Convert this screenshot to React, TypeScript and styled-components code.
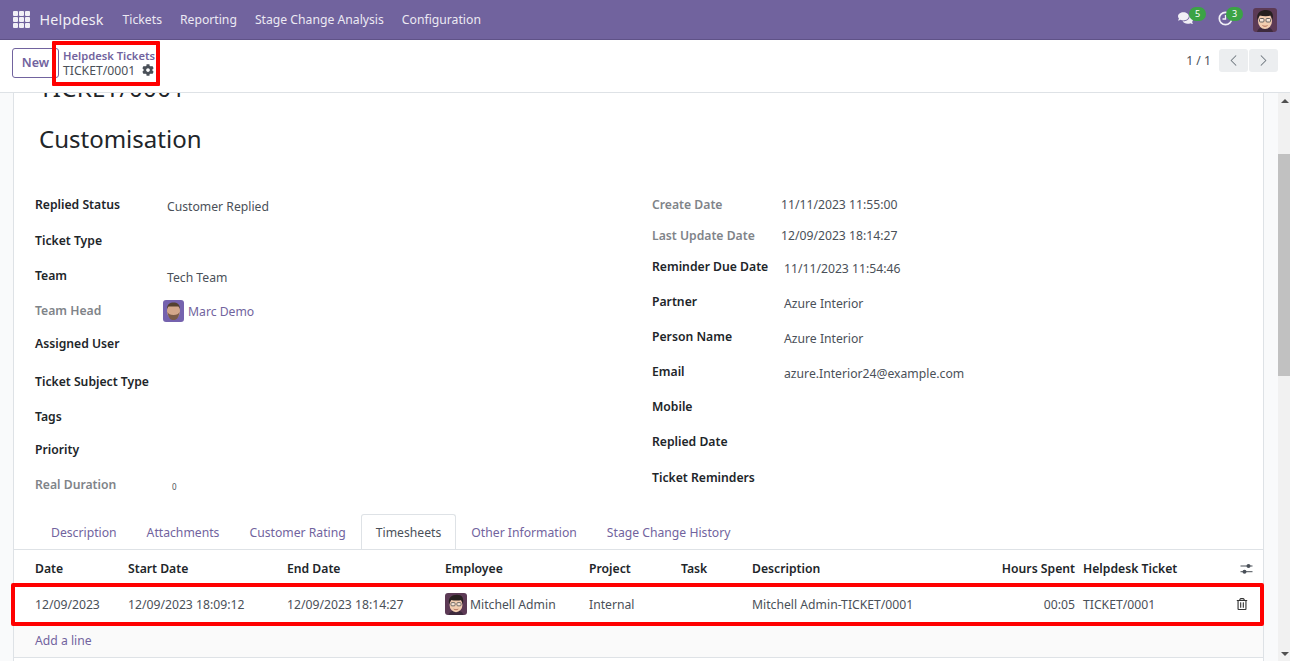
import styled, { createGlobalStyle } from 'styled-components'
import { ChevronLeft, ChevronRight } from 'lucide-react'
import { FaCog, FaComments, FaRegTrashAlt } from 'react-icons/fa'

const GlobalStyle = createGlobalStyle`
  html, body { margin: 0; height: 100%; }
  body {
    font-family: 'Noto Sans', 'Open Sans', sans-serif;
    font-size: 12.2px;
    color: #4a5058;
    background: #fff;
    overflow: hidden;
  }
  #root { height: 100%; }
`

const MitchellFace = ({ size }: { size: number }) => (
  <svg width={size} height={size} viewBox="0 0 24 24">
    <rect width="24" height="24" fill="#5c3a55" />
    <path d="M4 24c1-4 4-5 8-5s7 1 8 5z" fill="#3d2a3d" />
    <ellipse cx="12" cy="13" rx="7" ry="8" fill="#f2cdb0" />
    <path d="M4.500 12C3 5 7.500 2 13 2s8 3.500 6.500 10l-1.500-4.500c-3 1-7.500 1-11.500 0z" fill="#26201f" />
    <rect x="6.500" y="10.500" width="4.500" height="3.500" rx="1" fill="#f8e6d8" stroke="#555" strokeWidth="0.9" />
    <rect x="13" y="10.500" width="4.500" height="3.500" rx="1" fill="#f8e6d8" stroke="#555" strokeWidth="0.9" />
    <path d="M9.500 17.500c1.500 1 3.500 1 5 0" stroke="#a8604a" strokeWidth="0.9" fill="none" />
  </svg>
)

const MarcFace = () => (
  <svg width="21" height="22" viewBox="0 0 21 22">
    <rect width="21" height="22" fill="#7562ae" />
    <ellipse cx="10.500" cy="11" rx="6.500" ry="8" fill="#d3a68a" />
    <path d="M4 9C4 4 7 2.500 10.500 2.500S17 4 17 9l-1.500-2.500h-10z" fill="#54402f" />
    <path d="M4.500 12c1 7 3.500 8 6 8s5-1 6-8c-1 2-2.500 3-6 3s-5-1-6-3z" fill="#7a5b48" />
  </svg>
)

const ClockIcon = () => (
  <svg width="15" height="15" viewBox="0 0 15 15" fill="none" stroke="#f1eff6" strokeWidth="1.700">
    <circle cx="7.500" cy="7.500" r="6.200" />
    <path d="M7.500 4v4H4.500" strokeWidth="1.300" />
  </svg>
)

const AppsIcon = () => (
  <AppsGrid>
    {Array.from({ length: 9 }).map((_, i) => (
      <i key={i} />
    ))}
  </AppsGrid>
)

const OptionalIcon = () => (
  <svg width="13" height="12" viewBox="0 0 13 12" fill="#4a5058">
    <rect x="0.500" y="2.500" width="12" height="1" />
    <rect x="0.500" y="8.200" width="12" height="1" />
    <circle cx="8.500" cy="3" r="2" />
    <circle cx="4.500" cy="8.700" r="2" />
  </svg>
)

const leftFields = [
  { label: 'Replied Status', value: 'Customer Replied', h: 36 },
  { label: 'Ticket Type', h: 35 },
  { label: 'Team', value: 'Tech Team', h: 35 },
  { label: 'Team Head', muted: true, user: 'Marc Demo', h: 33 },
  { label: 'Assigned User', h: 38 },
  { label: 'Ticket Subject Type', h: 35 },
  { label: 'Tags', h: 33 },
  { label: 'Priority', h: 35 },
  { label: 'Real Duration', muted: true, value: '0', small: true, h: 35 }
]

const rightFields = [
  { label: 'Create Date', muted: true, value: '11/11/2023 11:55:00', h: 31, tight: true },
  { label: 'Last Update Date', muted: true, value: '12/09/2023 18:14:27', h: 31, tight: true },
  { label: 'Reminder Due Date', value: '11/11/2023 11:54:46', h: 35 },
  { label: 'Partner', value: 'Azure Interior', h: 35 },
  { label: 'Person Name', value: 'Azure Interior', h: 35 },
  { label: 'Email', value: 'azure.Interior24@example.com', h: 35 },
  { label: 'Mobile', h: 35 },
  { label: 'Replied Date', h: 36 },
  { label: 'Ticket Reminders', h: 35 }
]

const tabs = ['Description', 'Attachments', 'Customer Rating', 'Timesheets', 'Other Information', 'Stage Change History']

const App = () => (
  <Page>
    <GlobalStyle />
    <NavBar>
      <AppsIcon />
      <Brand>Helpdesk</Brand>
      <NavItem>Tickets</NavItem>
      <NavItem>Reporting</NavItem>
      <NavItem>Stage Change Analysis</NavItem>
      <NavItem>Configuration</NavItem>
      <NavRight>
        <NavIcon $gap={25}>
          <FaComments size={18} color="#f1eff6" />
          <Badge $left={11}>5</Badge>
        </NavIcon>
        <NavIcon $gap={20}>
          <ClockIcon />
          <Badge $left={8}>3</Badge>
        </NavIcon>
        <NavAvatar>
          <MitchellFace size={24} />
        </NavAvatar>
      </NavRight>
    </NavBar>
    <ControlPanel>
      <NewButton>New</NewButton>
      <Breadcrumb>
        <BreadcrumbLink>Helpdesk Tickets</BreadcrumbLink>
        <BreadcrumbCurrent>
          TICKET/0001
          <FaCog size={12} color="#4a5058" />
        </BreadcrumbCurrent>
        <Highlight />
      </Breadcrumb>
      <Pager>
        <PagerText>1 / 1</PagerText>
        <PagerButtons>
          <PagerButton>
            <ChevronLeft size={19} strokeWidth={1.300} />
          </PagerButton>
          <PagerButton>
            <ChevronRight size={19} strokeWidth={1.300} />
          </PagerButton>
        </PagerButtons>
      </Pager>
    </ControlPanel>
    <Content>
      <Sheet>
        <Heading>TICKET/0001</Heading>
        <SubHeading>Customisation</SubHeading>
        <Columns>
          <FieldColumn>
            {leftFields.map((f) => (
              <FieldRow key={f.label} $h={f.h}>
                <FieldLabel $muted={f.muted} $width={132}>
                  {f.label}
                </FieldLabel>
                {f.user ? (
                  <UserValue>
                    <AvatarBox>
                      <MarcFace />
                    </AvatarBox>
                    <UserName>{f.user}</UserName>
                  </UserValue>
                ) : (
                  <FieldValue $small={f.small} $left={f.small ? 5 : 0}>
                    {f.value}
                  </FieldValue>
                )}
              </FieldRow>
            ))}
          </FieldColumn>
          <FieldColumn>
            {rightFields.map((f) => (
              <FieldRow key={f.label} $h={f.h}>
                <FieldLabel $muted={f.muted} $width={f.tight ? 129 : 132}>
                  {f.label}
                </FieldLabel>
                <FieldValue $tight={f.tight}>{f.value}</FieldValue>
              </FieldRow>
            ))}
          </FieldColumn>
        </Columns>
        <TabBar>
          {tabs.map((t) => (
            <Tab key={t} $active={t === 'Timesheets'}>
              {t}
            </Tab>
          ))}
        </TabBar>
        <Table>
          <HeadRow>
            <Cell $w={93}>Date</Cell>
            <Cell $w={159}>Start Date</Cell>
            <Cell $w={158}>End Date</Cell>
            <Cell $w={144}>Employee</Cell>
            <Cell $w={92}>Project</Cell>
            <Cell $w={71}>Task</Cell>
            <Cell $w={243}>Description</Cell>
            <Cell $w={80} $right>
              Hours Spent
            </Cell>
            <Cell $w={8} />
            <Cell $w={152}>Helpdesk Ticket</Cell>
            <IconCell $left={5}>
              <OptionalIcon />
            </IconCell>
          </HeadRow>
          <BodyRow>
            <Cell $w={93}>12/09/2023</Cell>
            <Cell $w={159}>12/09/2023 18:09:12</Cell>
            <Cell $w={158}>12/09/2023 18:14:27</Cell>
            <Cell $w={144}>
              <Employee>
                <AvatarBox>
                  <MitchellFace size={22} />
                </AvatarBox>
                Mitchell Admin
              </Employee>
            </Cell>
            <Cell $w={92}>Internal</Cell>
            <Cell $w={71} />
            <Cell $w={243}>Mitchell Admin-TICKET/0001</Cell>
            <Cell $w={80} $right>
              00:05
            </Cell>
            <Cell $w={8} />
            <Cell $w={152}>TICKET/0001</Cell>
            <IconCell $left={1}>
              <FaRegTrashAlt size={12} color="#333" />
            </IconCell>
            <RowHighlight />
          </BodyRow>
          <AddRow>
            <AddLink>Add a line</AddLink>
          </AddRow>
        </Table>
      </Sheet>
      <ScrollTrack>
        <ScrollArrow $up />
        <ScrollThumbArea>
          <ScrollThumb />
        </ScrollThumbArea>
        <ScrollArrow />
      </ScrollTrack>
    </Content>
  </Page>
)

export default App

const Page = styled.div`
  display: flex;
  flex-direction: column;
  height: 100vh;
  overflow: hidden;
`

const NavBar = styled.header`
  display: flex;
  align-items: center;
  flex: 0 0 40px;
  box-sizing: border-box;
  height: 40px;
  padding: 0 13px 0 13px;
  background: #71639e;
  border-bottom: 1px solid #5f5287;
  color: #fff;
`

const AppsGrid = styled.div`
  display: grid;
  grid-template-columns: repeat(3, 4.500px);
  grid-auto-rows: 4.500px;
  gap: 1.500px;
  margin-right: 10px;

  i {
    display: block;
    background: #f1eff6;
    border-radius: 1px;
  }
`

const Brand = styled.div`
  font-size: 14.300px;
  letter-spacing: 0.2px;
  color: #f1eff6;
  margin-right: 19px;
`

const NavItem = styled.div`
  font-size: 12.200px;
  color: #ece9f3;
  margin-right: 18px;
`

const NavRight = styled.div`
  display: flex;
  align-items: center;
  margin-left: auto;
`

const NavIcon = styled.div<{ $gap: number }>`
  position: relative;
  display: flex;
  align-items: center;
  width: 15px;
  height: 15px;
  margin-right: ${({ $gap }) => $gap}px;
  margin-bottom: 3px;
`

const Badge = styled.span<{ $left: number }>`
  position: absolute;
  top: -4px;
  left: ${({ $left }) => $left}px;
  width: 17px;
  height: 14px;
  border-radius: 7px;
  background: #3ba345;
  color: #fff;
  font-size: 9px;
  line-height: 14px;
  text-align: center;
`

const NavAvatar = styled.div`
  display: flex;
  width: 24px;
  height: 24px;
  border-radius: 3px;
  overflow: hidden;
`

const ControlPanel = styled.div`
  display: flex;
  align-items: center;
  flex: 0 0 53px;
  box-sizing: border-box;
  padding: 0 12px 7px 12px;
  background: #fff;
  border-bottom: 1px solid #dee2e6;
`

const NewButton = styled.button`
  width: 47px;
  height: 30px;
  padding: 0;
  background: #fff;
  border: 1px solid #71639e;
  border-radius: 3px;
  color: #71639e;
  font: 600 12.500px 'Noto Sans', sans-serif;
`

const Breadcrumb = styled.div`
  position: relative;
  display: flex;
  flex-direction: column;
  margin-left: 4px;
`

const BreadcrumbLink = styled.div`
  font-size: 11.200px;
  font-weight: 600;
  line-height: 15px;
  color: #71639e;
`

const BreadcrumbCurrent = styled.div`
  display: flex;
  align-items: center;
  gap: 7px;
  font-size: 12.200px;
  line-height: 15px;
  color: #4a5058;
`

const Highlight = styled.div`
  position: absolute;
  top: -7px;
  left: -11px;
  width: 108px;
  height: 45px;
  box-sizing: border-box;
  border: 4px solid #f00;
  border-radius: 1px;
`

const Pager = styled.div`
  display: flex;
  align-items: center;
  margin-left: auto;
  margin-bottom: 5px;
  gap: 8px;
`

const PagerText = styled.span`
  font-size: 12.200px;
  color: #4a5058;
`

const PagerButtons = styled.div`
  display: flex;
  gap: 1px;
`

const PagerButton = styled.div`
  display: flex;
  align-items: center;
  justify-content: center;
  width: 29px;
  height: 23px;
  background: #eceef0;
  border-radius: 3px;
  color: #6c757d;
`

const Content = styled.main`
  display: flex;
  flex: 1;
  min-height: 0;
  background: #f9fafb;
  padding-left: 13px;
  overflow: hidden;
`

const Sheet = styled.section`
  flex: 0 0 1251px;
  box-sizing: border-box;
  height: 650px;
  margin-top: -44px;
  background: #fff;
  border: 1px solid #dee2e6;
  border-width: 0 1px;
`

const Heading = styled.div`
  height: 46px;
  padding: 19px 0 0 25px;
  font-size: 24px;
  line-height: 40px;
  letter-spacing: 0.4px;
  color: #212529;
`

const SubHeading = styled.div`
  height: 75px;
  padding: 7px 0 0 25px;
  font-size: 24px;
  line-height: 36px;
  color: #212529;
`

const Columns = styled.div`
  display: grid;
  grid-template-columns: 617px 1fr;
  padding: 0 0 0 21px;
  margin-top: 0;
`

const FieldColumn = styled.div`
  display: flex;
  flex-direction: column;
`

const FieldRow = styled.div<{ $h: number }>`
  display: flex;
  align-items: flex-start;
  height: ${({ $h }) => $h}px;
`

const FieldLabel = styled.div<{ $muted?: boolean; $width: number }>`
  flex: 0 0 ${({ $width }) => $width}px;
  font-weight: 600;
  font-size: 12.200px;
  line-height: 17px;
  color: ${({ $muted }) => ($muted ? '#7f8489' : '#212529')};
`

const FieldValue = styled.div<{ $small?: boolean; $tight?: boolean; $left?: number }>`
  margin-top: ${({ $tight }) => ($tight ? 0 : 2)}px;
  margin-left: ${({ $left }) => $left ?? 0}px;
  font-size: ${({ $small }) => ($small ? 8 : 12.200)}px;
  line-height: 17px;
  color: #4a5058;
`

const UserValue = styled.div`
  display: flex;
  align-items: center;
  gap: 4px;
  margin-left: -4px;
  margin-top: -2px;
`

const AvatarBox = styled.span`
  display: flex;
  border-radius: 3px;
  overflow: hidden;
`

const UserName = styled.span`
  color: #71639e;
  font-size: 12.200px;
`

const TabBar = styled.nav`
  display: flex;
  height: 35px;
  padding-left: 22px;
  border-bottom: 1px solid #dee2e6;
  margin-top: 3px;
`

const Tab = styled.div<{ $active?: boolean }>`
  box-sizing: border-box;
  height: 35px;
  padding: 9px 14px 0;
  font-size: 12.200px;
  line-height: 17px;
  color: ${({ $active }) => ($active ? '#4a5058' : '#71639e')};
  background: ${({ $active }) => ($active ? '#fff' : 'transparent')};
  border: 1px solid ${({ $active }) => ($active ? '#dee2e6' : 'transparent')};
  border-bottom: 0;
  border-radius: 3px 3px 0 0;
`

const Table = styled.div`
  display: flex;
  flex-direction: column;
`

const HeadRow = styled.div`
  display: flex;
  align-items: center;
  box-sizing: border-box;
  height: 34px;
  padding: 3px 0 0 21px;
  font-weight: 600;
  color: #212529;
`

const BodyRow = styled.div`
  position: relative;
  display: flex;
  align-items: center;
  height: 38px;
  padding-left: 21px;
  border-top: 1px solid #dee2e6;
  border-bottom: 1px solid #dee2e6;
`

const Cell = styled.div<{ $w: number; $right?: boolean }>`
  flex: 0 0 ${({ $w }) => $w}px;
  box-sizing: border-box;
  white-space: nowrap;
  text-align: ${({ $right }) => ($right ? 'right' : 'left')};
`

const IconCell = styled.div<{ $left: number }>`
  display: flex;
  margin-left: ${({ $left }) => $left}px;
`

const Employee = styled.div`
  display: flex;
  align-items: center;
  gap: 3px;
`

const RowHighlight = styled.div`
  position: absolute;
  top: -2px;
  left: -3px;
  right: -1px;
  bottom: -3px;
  border: 4px solid #f00;
  border-radius: 2px;
`

const AddRow = styled.div`
  display: flex;
  align-items: center;
  height: 33px;
  padding-left: 21px;
  background: #fafafa;
  border-bottom: 1px solid #dee2e6;
`

const AddLink = styled.span`
  color: #71639e;
`

const ScrollTrack = styled.div`
  display: flex;
  flex-direction: column;
  flex: 0 0 12px;
  margin-left: 14px;
  background: #f1f1f1;
`

const ScrollArrow = styled.div<{ $up?: boolean }>`
  flex: 0 0 12px;
  position: relative;

  &::after {
    content: '';
    position: absolute;
    left: 3px;
    top: ${({ $up }) => ($up ? 6 : 3)}px;
    border-left: 4px solid transparent;
    border-right: 4px solid transparent;
    ${({ $up }) => ($up ? 'border-bottom: 4px solid #505050;' : 'border-top: 4px solid #505050;')}
  }
`

const ScrollThumbArea = styled.div`
  flex: 1;
  padding-top: 49px;
`

const ScrollThumb = styled.div`
  height: 222px;
  background: #c1c1c1;
`
